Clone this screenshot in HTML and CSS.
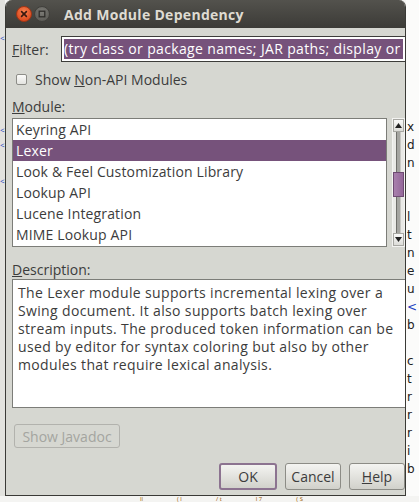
FILE: index.html
```html
<!DOCTYPE html>
<html>
<head>
<meta charset="utf-8">
<link rel="stylesheet" href="styles.css">
</head>
<body>
<div class="screen">
  <div class="left-strip">
    <span class="lt l1">&lt;</span>
    <span class="lt l2">&lt;</span>
    <span class="lt l3">&lt;</span>
    <span class="lt l4">&lt;</span>
  </div>
  <div class="dialog">
    <div class="titlebar">
      <span class="wbtn close">
        <svg width="16" height="16" viewBox="0 0 16 16"><defs><radialGradient id="cg" cx="0.5" cy="0.35" r="0.65"><stop offset="0" stop-color="#f7804f"/><stop offset="1" stop-color="#d9461b"/></radialGradient></defs><circle cx="8" cy="8" r="7.5" fill="url(#cg)" stroke="#9e3516" stroke-width="1"/><path d="M5.6 5.6 L10.4 10.4 M10.4 5.6 L5.6 10.4" stroke="#3a1a10" stroke-width="1.6" stroke-linecap="round"/></svg>
      </span>
      <span class="wbtn min">
        <svg width="16" height="16" viewBox="0 0 16 16"><defs><radialGradient id="mg" cx="0.5" cy="0.35" r="0.65"><stop offset="0" stop-color="#7c7b76"/><stop offset="1" stop-color="#5b5a55"/></radialGradient></defs><circle cx="8" cy="8" r="7.5" fill="url(#mg)" stroke="#403f3b" stroke-width="1"/><rect x="5.2" y="5.2" width="5.6" height="5.6" fill="none" stroke="#2e2d2a" stroke-width="1.3"/></svg>
      </span>
      <span class="title">Add Module Dependency</span>
    </div>
    <div class="content">
      <div class="filter-row">
        <span class="label"><u>F</u>ilter:</span>
        <div class="input"><span class="sel">(try class or package names; JAR paths; display or</span></div>
      </div>
      <div class="check-row">
        <span class="checkbox"></span>
        <span class="label">Show <u>N</u>on-API Modules</span>
      </div>
      <div class="label section"><u>M</u>odule:</div>
      <div class="list-row">
        <div class="list">
          <div class="item">Keyring API</div>
          <div class="item selected">Lexer</div>
          <div class="item">Look &amp; Feel Customization Library</div>
          <div class="item">Lookup API</div>
          <div class="item">Lucene Integration</div>
          <div class="item">MIME Lookup API</div>
        </div>
        <div class="scrollbar">
          <div class="sbtn"><svg width="7" height="5" viewBox="0 0 7 5"><path d="M0 5 L3.5 0 L7 5 Z" fill="#222"/></svg></div>
          <div class="track">
            <div class="groove g1"></div>
            <div class="thumb"></div>
            <div class="groove g2"></div>
          </div>
          <div class="sbtn"><svg width="7" height="5" viewBox="0 0 7 5"><path d="M0 0 L3.5 5 L7 0 Z" fill="#222"/></svg></div>
        </div>
      </div>
      <div class="label section desc-label"><u>D</u>escription:</div>
      <div class="desc">
        <div class="line">The Lexer module supports incremental lexing over a</div>
        <div class="line">Swing document. It also supports batch lexing over</div>
        <div class="line">stream inputs. The produced token information can be</div>
        <div class="line">used by editor for syntax coloring but also by other</div>
        <div class="line">modules that require lexical analysis.</div>
      </div>
      <div class="javadoc-row">
        <span class="btn disabled"><span>Show <u>J</u>avadoc</span></span>
      </div>
      <div class="buttons">
        <span class="btn ok"><span>OK</span></span>
        <span class="btn"><span>Cancel</span></span>
        <span class="btn"><span><u>H</u>elp</span></span>
      </div>
    </div>
  </div>
  <div class="right-strip">
    <span class="rt">x</span>
    <span class="rt">d</span>
    <span class="rt">n</span>
    <span class="rt">&nbsp;</span>
    <span class="rt">&nbsp;</span>
    <span class="rt">l</span>
    <span class="rt">t</span>
    <span class="rt">n</span>
    <span class="rt">e</span>
    <span class="rt">u</span>
    <span class="rt blue">&lt;</span>
    <span class="rt">b</span>
    <span class="rt">&nbsp;</span>
    <span class="rt">c</span>
    <span class="rt">t</span>
    <span class="rt">r</span>
    <span class="rt">r</span>
    <span class="rt">r</span>
    <span class="rt">i</span>
    <span class="rt">b</span>
  </div>
</div>
<div class="bottom-strip">
  <span class="bt">ll</span><span class="bt">( l</span><span class="bt">/ t</span><span class="bt">l 7</span><span class="bt">( S</span>
</div>
</body>
</html>
```

FILE: styles.css
```css
html, body {
  margin: 0;
  padding: 0;
}
body {
  width: 419px;
  height: 502px;
  overflow: hidden;
  background: #f4f4f2;
  font-family: "Open Sans", "DejaVu Sans", sans-serif;
  font-size: 14px;
  color: #3c3c3c;
}
.screen {
  display: flex;
  height: 496px;
}
.left-strip {
  width: 5px;
  flex: none;
  background: #e2e2de;
  display: flex;
  flex-direction: column;
  overflow: hidden;
}
.lt {
  color: #2040c0;
  font-size: 8px;
  line-height: 8px;
}
.l1 { margin-top: 34px; }
.l2 { margin-top: 84px; }
.l3 { margin-top: 7px; }
.l4 { margin-top: 28px; }
.dialog {
  width: 399px;
  flex: none;
  display: flex;
  flex-direction: column;
  background: #d6d7d1;
  border-left: 1px solid #3a3a36;
  border-right: 1px solid #3a3a36;
  border-bottom: 1px solid #3a3a36;
  border-radius: 7px 7px 0 0;
  overflow: hidden;
}
.titlebar {
  height: 28px;
  flex: none;
  background: linear-gradient(#53524d, #3c3b37);
  display: flex;
  align-items: center;
  padding-left: 10px;
  gap: 2px;
}
.wbtn {
  width: 16px;
  height: 16px;
  display: block;
}
.wbtn svg { display: block; }
.title {
  margin-left: 12px;
  color: #dfdbd2;
  font-weight: bold;
  font-size: 14px;
  letter-spacing: 0.3px;
}
.content {
  flex: 1;
  display: flex;
  flex-direction: column;
  padding: 8px 0 0 6px;
}
.content > * {
  flex-shrink: 0;
}
.label {
  color: #3c3c3c;
  white-space: nowrap;
}
.filter-row {
  display: flex;
  align-items: center;
  height: 26px;
}
.filter-row .label {
  width: 49px;
}
.input {
  flex: 1;
  height: 26px;
  box-sizing: border-box;
  border: 1px solid #3d3d3a;
  border-right: none;
  background: #fff;
  padding: 2px 0 2px 2px;
  display: flex;
  overflow: hidden;
}
.sel {
  flex: 1;
  background: #76527b;
  color: #fff;
  line-height: 20px;
  white-space: nowrap;
  overflow: hidden;
  margin-right: 2px;
  letter-spacing: 0.35px;
}
.check-row {
  display: flex;
  align-items: center;
  height: 20px;
  margin-top: 7px;
  padding-left: 4px;
  gap: 8px;
}
.checkbox {
  width: 9px;
  height: 9px;
  border: 1px solid #8d8d88;
  border-radius: 2px;
  background: linear-gradient(#fbfbfa, #e4e4e0);
}
.section {
  margin-top: 9px;
  margin-bottom: 2px;
  line-height: 18px;
}
.list-row {
  display: flex;
  height: 129px;
  gap: 5px;
}
.list {
  width: 375px;
  flex: none;
  box-sizing: border-box;
  border: 1px solid #7c7d78;
  background: #fff;
  overflow: hidden;
}
.item {
  height: 21px;
  line-height: 21px;
  padding-left: 3px;
  white-space: nowrap;
  color: #3c3c3c;
  letter-spacing: 0.15px;
}
.item.selected {
  background: #76527b;
  color: #fff;
}
.scrollbar {
  width: 13px;
  flex: none;
  box-sizing: border-box;
  border: 1px solid #f3f3f1;
  background: #e9e9e6;
  display: flex;
  flex-direction: column;
}
.sbtn {
  height: 11px;
  flex: none;
  display: flex;
  align-items: center;
  justify-content: center;
  background: linear-gradient(#fafaf9, #dcdcd8);
  border: 1px solid #a8a8a3;
}
.sbtn svg { display: block; }
.track {
  flex: 1;
  display: flex;
  flex-direction: column;
  align-items: center;
}
.groove {
  width: 3px;
  background: #a5a5a1;
  border-left: 1px solid #6f6f6b;
  border-right: 1px solid #c8c8c4;
}
.g1 { height: 40px; }
.g2 { flex: 1; }
.thumb {
  width: 11px;
  height: 25px;
  flex: none;
  box-sizing: border-box;
  background: linear-gradient(90deg, #a980ad, #94679a);
  border: 1px solid #6e4a72;
}
.desc-label {
  margin-top: 14px;
  margin-bottom: 0;
}
.desc {
  height: 129px;
  box-sizing: border-box;
  border: 1px solid #7c7d78;
  border-right: none;
  background: #fff;
  padding: 4px 0 0 5px;
  line-height: 18px;
  color: #3c3c3c;
  letter-spacing: 0.35px;
}
.line {
  white-space: nowrap;
}
.javadoc-row {
  margin-top: 16px;
  padding-left: 2px;
  display: flex;
}
.btn {
  display: flex;
  align-items: center;
  justify-content: center;
  box-sizing: border-box;
  height: 27px;
  border: 1px solid #8c8c86;
  border-radius: 3px;
  background: linear-gradient(#f4f4f1, #d1d1cb);
  color: #3c3c3c;
  font-size: 14px;
  white-space: nowrap;
}
.btn.disabled {
  width: 106px;
  height: 24px;
  background: #d6d7d1;
  border-color: #b2b2ad;
  color: #a4a5a0;
}
.buttons {
  margin-top: 15px;
  display: flex;
  justify-content: flex-end;
  gap: 8px;
}
.buttons .btn {
  width: 56px;
}
.buttons .btn.ok {
  width: 58px;
  border: 2px solid #8c7390;
}
.right-strip {
  flex: 1;
  background: #fbfbfa;
  display: flex;
  flex-direction: column;
  overflow: hidden;
  padding-top: 118px;
}
.rt {
  font-family: "DejaVu Sans", sans-serif;
  font-size: 12px;
  line-height: 18px;
  color: #222;
  padding-left: 1px;
}
.rt.blue { color: #2040c0; }
.bottom-strip {
  height: 6px;
  overflow: hidden;
  display: flex;
  gap: 34px;
  padding-left: 140px;
  font-size: 6px;
  line-height: 6px;
  color: #a05a00;
}
```
